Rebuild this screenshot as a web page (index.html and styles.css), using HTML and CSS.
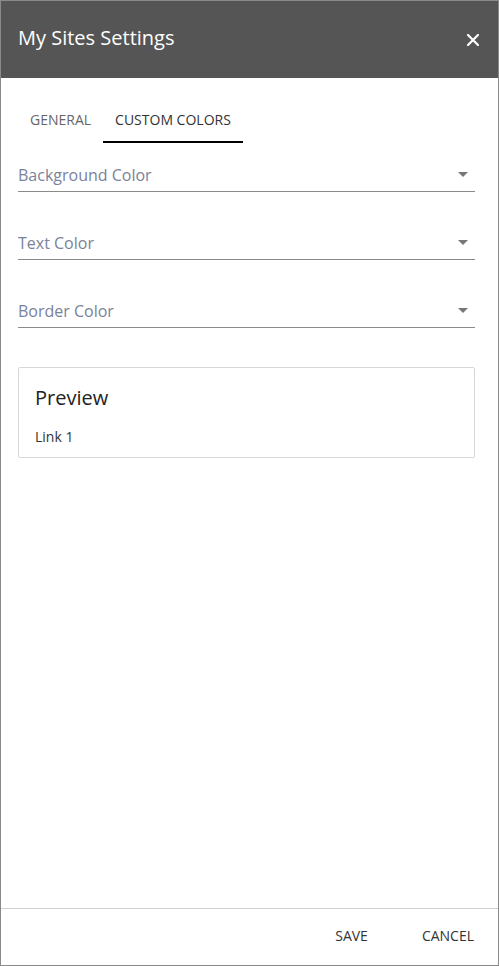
FILE: index.html
```html
<!DOCTYPE html>
<html>
<head>
<meta charset="utf-8">
<link rel="stylesheet" href="styles.css">
</head>
<body>
<div class="panel">
  <header class="header">
    <h1 class="title">My Sites Settings</h1>
    <button class="close" aria-label="Close">
      <svg width="12" height="12" viewBox="0 0 12 12"><path d="M1 1L11 11M11 1L1 11" stroke="#fff" stroke-width="2.2" stroke-linecap="square"/></svg>
    </button>
  </header>
  <main class="content">
    <nav class="tabs">
      <div class="tab">GENERAL</div>
      <div class="tab active">CUSTOM COLORS</div>
    </nav>
    <div class="fields">
      <div class="select"><span class="label">Background Color</span><span class="caret"></span></div>
      <div class="select"><span class="label">Text Color</span><span class="caret"></span></div>
      <div class="select"><span class="label">Border Color</span><span class="caret"></span></div>
    </div>
    <section class="preview">
      <h2 class="preview-title">Preview</h2>
      <div class="preview-link">Link 1</div>
    </section>
  </main>
  <footer class="footer">
    <button class="btn">SAVE</button>
    <button class="btn">CANCEL</button>
  </footer>
</div>
</body>
</html>
```

FILE: styles.css
```css
* { box-sizing: border-box; }
html, body { margin: 0; padding: 0; }
body {
  font-family: "Open Sans", "Noto Sans", sans-serif;
  background: #fff;
}
.panel {
  width: 499px;
  height: 966px;
  border: 1px solid #8a8a8a;
  display: flex;
  flex-direction: column;
}
.header {
  height: 77px;
  background: #555555;
  display: flex;
  align-items: center;
  justify-content: space-between;
  padding: 0 19px 0 17px;
  flex-shrink: 0;
}
.title {
  margin: 0;
  color: #fff;
  font-size: 20px;
  font-weight: 400;
  position: relative;
  top: -2px;
}
.close {
  background: none;
  border: 0;
  padding: 0;
  width: 12px;
  height: 12px;
  display: flex;
}
.content {
  flex: 1;
  padding: 0 23px 0 17px;
}
.tabs {
  display: flex;
  margin-top: 27px;
  height: 38px;
}
.tab {
  font-size: 14px;
  color: #666;
  padding: 5px 12px 0 12px;
  height: 38px;
}
.active {
  color: #333;
  border-bottom: 2px solid #000;
}
.fields {
  display: flex;
  flex-direction: column;
  gap: 35px;
  margin-top: 16px;
}
.select {
  height: 33px;
  border-bottom: 1px solid #8a8a8a;
  display: flex;
  align-items: flex-start;
  justify-content: space-between;
  padding-right: 7px;
}
.label {
  font-size: 16px;
  color: #7a8299;
  line-height: 22px;
  margin-top: 5px;
}
.caret {
  width: 0;
  height: 0;
  border-left: 5px solid transparent;
  border-right: 5px solid transparent;
  border-top: 5px solid #777;
  margin-top: 13px;
}
.preview {
  margin-top: 39px;
  border: 1px solid #d8d8d8;
  border-radius: 2px;
  height: 91px;
  padding: 16px 16px 0;
}
.preview-title {
  margin: 0;
  font-size: 20px;
  font-weight: 400;
  color: #222;
  line-height: 28px;
}
.preview-link {
  margin-top: 16px;
  font-size: 14px;
  color: #333;
  line-height: 18px;
}
.footer {
  height: 57px;
  border-top: 1px solid #cfcfcf;
  display: flex;
  justify-content: flex-end;
  align-items: center;
  gap: 54px;
  padding: 0 24px 4px 0;
  flex-shrink: 0;
}
.btn {
  background: none;
  border: 0;
  padding: 0;
  font-family: inherit;
  font-size: 14px;
  color: #333;
}
```
